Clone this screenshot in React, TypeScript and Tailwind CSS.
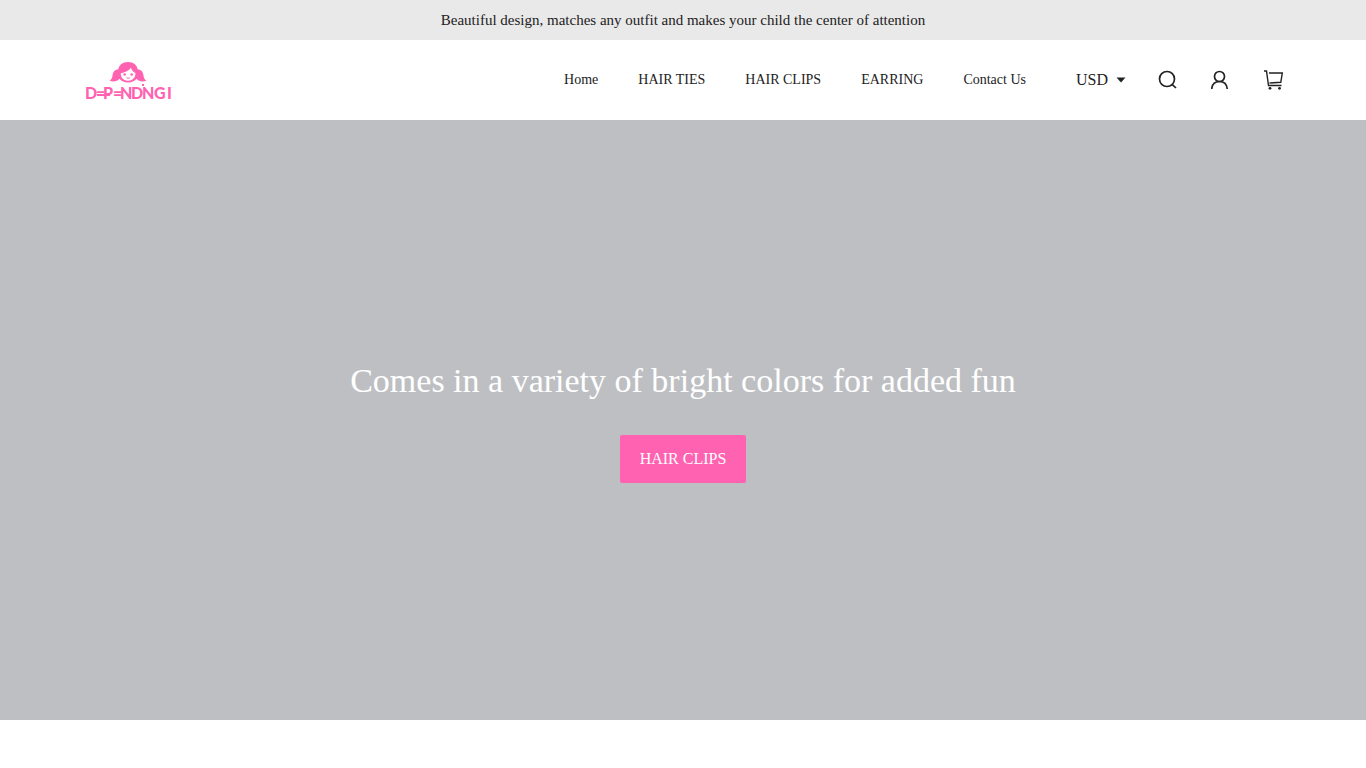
const links = ['Home', 'HAIR TIES', 'HAIR CLIPS', 'EARRING', 'Contact Us'];

const currencies = ['USD'];

function Logo() {
  return (
    <svg
      viewBox="0 -1 86 44"
      className="h-11 w-[86px] overflow-visible"
      fill="#ff62b0"
      role="img"
      aria-label="Dependingi"
    >
      {/* Hair */}
      <path d="M43 3C37.500 3 34 6 33.200 10.500C29.500 10.500 28 13 27.600 16C27.300 19 26.500 20.500 24.500 21.500C28 23.200 32 22.600 34.500 19.800C36.500 22.500 39.500 23.500 43 23.500C46.500 23.500 49.500 22.500 51.500 19.800C54 22.600 58 23.200 61.500 21.500C59.500 20.500 58.700 19 58.400 16C58 13 56.500 10.500 52.800 10.500C52 6 48.500 3 43 3Z" />
      {/* Face */}
      <path fill="#fff" d="M35.800 14.200C40 13.500 44 11.500 46 8.800C46.500 11.500 48.500 13.200 50.500 14C50.700 18.500 47.500 21.700 43 21.700C38.800 21.700 35.600 18.800 35.800 14.200Z" />
      <circle cx="39.700" cy="15.500" r="1.300" />
      <circle cx="46.700" cy="15.500" r="1.300" />
      <path d="M41 18.300Q43.200 19.200 45.400 18.300Q43.200 21.300 41 18.300Z" />
      <text x="0 11 18 28 35 46 57 69 82" y="40" fontFamily="Lato, sans-serif" fontWeight="900" fontSize="16">
        D=P=NDNGI
      </text>
      {/* Cord running through the wordmark */}
      <rect x="12" y="35" width="13" height="2" />
      <rect x="57" y="25" width="2" height="2" />
    </svg>
  );
}

function SearchIcon() {
  return (
    <svg viewBox="0 0 20 20" className="size-5" fill="none" stroke="#222" strokeWidth="1.7" aria-hidden="true">
      <circle cx="9" cy="9" r="7.500" />
      <path d="M14 14.300L18 18" />
    </svg>
  );
}

function UserIcon() {
  return (
    <svg viewBox="0 0 20 20" className="size-5" fill="none" stroke="#222" strokeWidth="1.7" aria-hidden="true">
      <circle cx="8.500" cy="6.500" r="5" />
      <path d="M0.700 19C1.100 14.500 4 11.500 8.500 11.500S15.900 14.500 16.300 19" />
    </svg>
  );
}

function CartIcon() {
  return (
    <svg viewBox="0 0 20 20" className="size-5" fill="none" stroke="#222" strokeWidth="1.4" aria-hidden="true">
      <path d="M0 1H2.500L4.500 15.500H17.500" />
      <path d="M5 3H18.300L16.800 12.300L5.500 13" />
      <circle cx="6" cy="18.300" r="1.400" fill="#222" stroke="none" />
      <circle cx="15.500" cy="18.300" r="1.400" fill="#222" stroke="none" />
    </svg>
  );
}

export default function App() {
  return (
    <div className="min-h-screen bg-white font-['Liberation_Serif',serif] text-[#222]">
      <div className="flex h-10 items-center justify-center bg-[#e9e9e9] px-4 text-[15px]">
        <p>Beautiful design, matches any outfit and makes your child the center of attention</p>
      </div>

      <header className="flex h-20 items-center justify-between pr-[82px] pl-[85px]">
        <a href="#">
          <Logo />
        </a>

        <div className="flex items-center">
          <nav className="flex gap-10 text-sm">
            {links.map((link) => (
              <a key={link} href="#">
                {link}
              </a>
            ))}
          </nav>

          <label className="ml-[50px] flex items-center">
            <span className="sr-only">Currency</span>
            <select className="-mr-2 h-8 w-12 appearance-none bg-transparent text-base">
              {currencies.map((currency) => (
                <option key={currency}>{currency}</option>
              ))}
            </select>
            <svg viewBox="0 0 10 6" className="h-[6px] w-[10px]" fill="#222" aria-hidden="true">
              <path d="M0.500 0.500H9.500L5 5.500Z" />
            </svg>
          </label>

          <div className="ml-8 flex gap-[33px]">
            <button type="button" aria-label="Search">
              <SearchIcon />
            </button>
            <button type="button" aria-label="Account">
              <UserIcon />
            </button>
            <button type="button" aria-label="Cart">
              <CartIcon />
            </button>
          </div>
        </div>
      </header>

      <main className="flex h-[600px] flex-col items-center justify-center gap-[34px] bg-[#bebfc3] pt-1 text-white">
        <h1 className="text-[34px] leading-10">Comes in a variety of bright colors for added fun</h1>
        <a href="#" className="flex h-12 items-center rounded-xs bg-[#ff62b0] px-5 text-base">
          HAIR CLIPS
        </a>
      </main>
    </div>
  );
}
